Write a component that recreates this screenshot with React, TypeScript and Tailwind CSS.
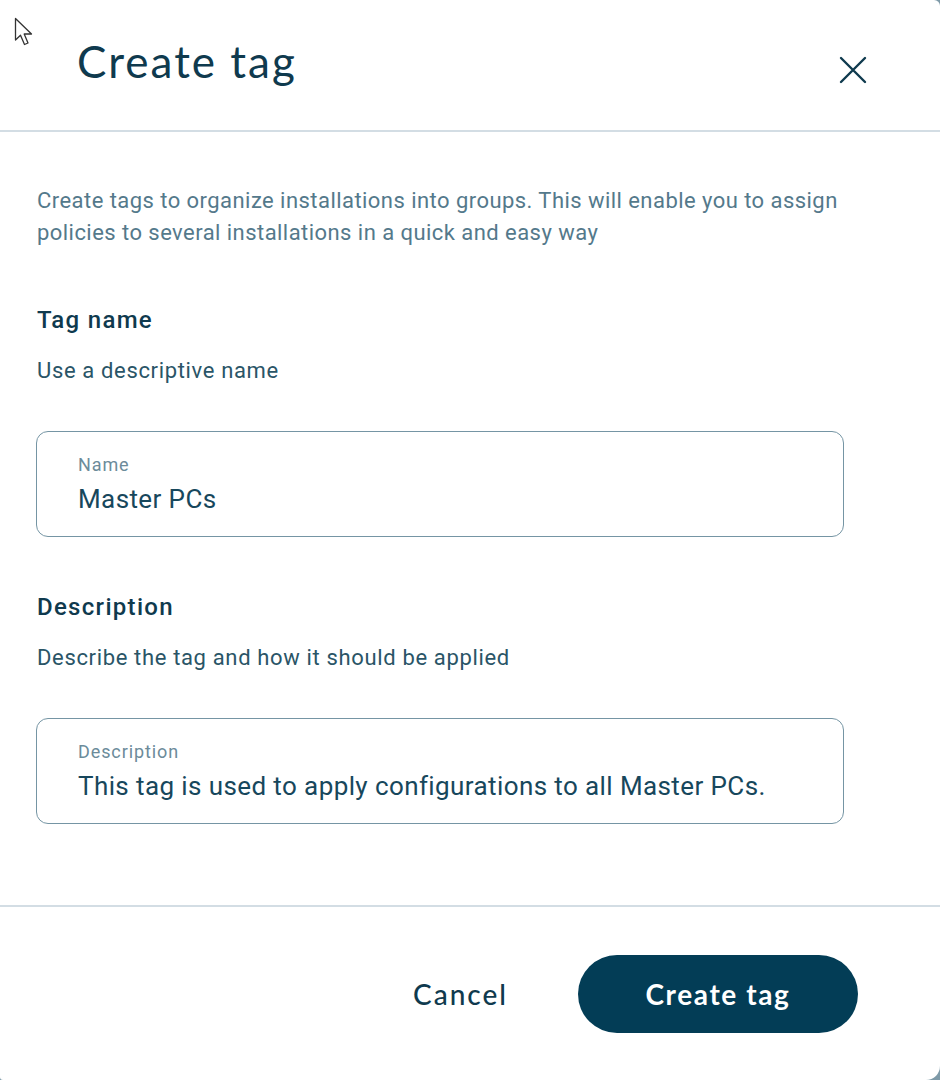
import React, { useState } from "react";

const heading = { fontFamily: "Lato, 'Open Sans', sans-serif" };

const Field: React.FC<{ label: string; value: string }> = ({ label, value }) => (
  <div className="w-[808px] h-[106px] rounded-[12px] border-[1.5px] border-[#7595a4] pl-[41px] pt-[23px] bg-white">
    <div className="text-[18px] leading-[20px] tracking-[0.9px] text-[#6c8b9a]">{label}</div>
    <div className="mt-[9px] text-[26px] leading-[30px] tracking-[0.4px] text-[#17475c]">{value}</div>
  </div>
);

const App: React.FC = () => {
  const [name] = useState("Master PCs");
  const [description] = useState(
    "This tag is used to apply configurations to all Master PCs."
  );

  return (
    <div className="w-[940px] h-[1080px] bg-[#7e9aa8]">
      <div
        className="relative w-[940px] h-[1080px] bg-white rounded-tr-[6px] rounded-br-[14px] rounded-bl-[3px] overflow-hidden"
        style={{ fontFamily: "Roboto, 'Liberation Sans', sans-serif" }}
      >
        {/* mouse pointer */}
        <svg
          className="absolute left-[14px] top-[17px]"
          width="22"
          height="30"
          viewBox="0 0 22 30"
        >
          <path
            d="M1.5 1.5 L1.5 23 L6.5 18.2 L10.5 27.5 L14 26 L10.2 17 L17.5 17 Z"
            fill="#fff"
            stroke="#333"
            strokeWidth="1.3"
            strokeLinejoin="round"
          />
        </svg>

        {/* header */}
        <div className="h-[130px] flex items-start justify-between pl-[77px] pr-[72px]">
          <h1
            className="mt-[38px] text-[44px] leading-[46px] text-[#0f3a4e] tracking-[2px]"
            style={heading}
          >
            Create tag
          </h1>
          <button className="mt-[55px] w-[30px] h-[30px] flex items-center justify-center text-[#0f3a4e]">
            <svg width="28" height="28" viewBox="0 0 28 28" fill="none">
              <path
                d="M2 2 L26 26 M26 2 L2 26"
                stroke="currentColor"
                strokeWidth="2.4"
                strokeLinecap="round"
              />
            </svg>
          </button>
        </div>
        <div className="h-[2px] bg-[#d3dde4]" />

        {/* body */}
        <div className="pl-[36px] pt-[53px] h-[773px]">
          <p className="text-[22px] leading-[32px] tracking-[0.45px] text-[#54798b] pl-[1px] w-[820px]">
            Create tags to organize installations into groups. This will enable you to assign policies to several installations in a quick and easy way
          </p>

          <h2 className="mt-[57px] pl-[1px] text-[24px] leading-[28px] tracking-[1.3px] font-medium text-[#0f3a4e]">
            Tag name
          </h2>
          <p className="mt-[23px] pl-[1px] text-[22px] leading-[28px] tracking-[0.65px] text-[#2a5567]">
            Use a descriptive name
          </p>
          <div className="mt-[46px]">
            <Field label="Name" value={name} />
          </div>

          <h2 className="mt-[56px] pl-[1px] text-[24px] leading-[28px] tracking-[1.3px] font-medium text-[#0f3a4e]">
            Description
          </h2>
          <p className="mt-[23px] pl-[1px] text-[22px] leading-[28px] tracking-[0.65px] text-[#2a5567]">
            Describe the tag and how it should be applied
          </p>
          <div className="mt-[46px]">
            <Field label="Description" value={description} />
          </div>
        </div>
        <div className="h-[2px] bg-[#d3dde4]" />

        {/* footer */}
        <div className="flex items-center justify-end pr-[82px] pt-[48px] gap-[70px]" style={heading}>
          <button className="text-[28px] font-medium text-[#0f3a4e] tracking-[2px]">
            Cancel
          </button>
          <button className="w-[280px] h-[78px] rounded-full bg-[#033d56] text-white text-[28px] font-bold tracking-[1.6px]">
            Create tag
          </button>
        </div>
      </div>
    </div>
  );
};

export default App;
